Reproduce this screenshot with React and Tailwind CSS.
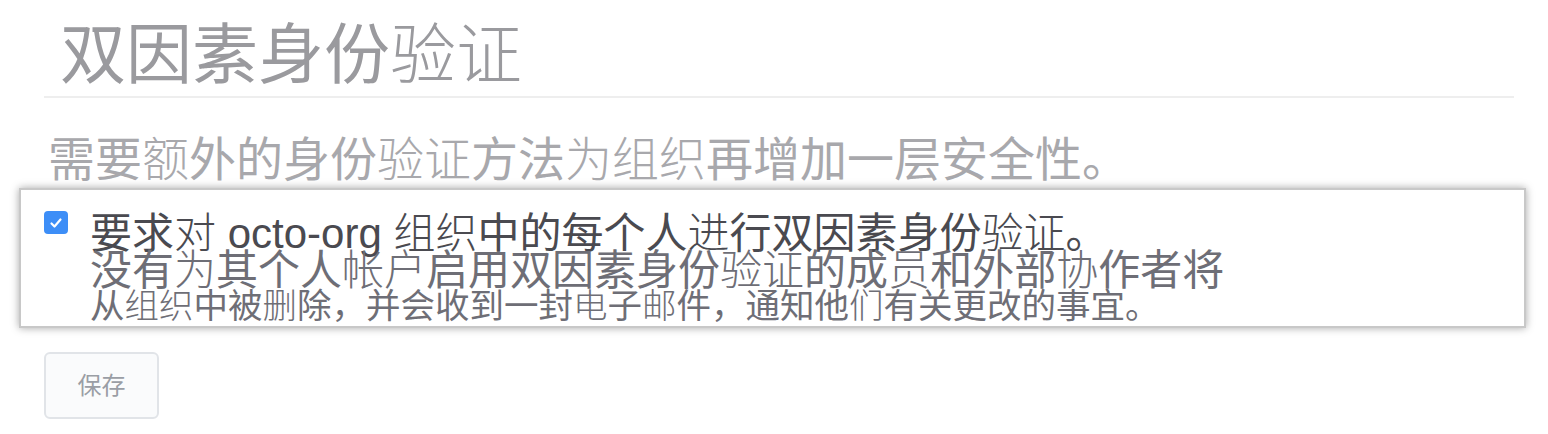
function B({ children }) {
  return <span className="font-normal">{children}</span>;
}
function T({ children }) {
  return <span className="font-extralight">{children}</span>;
}

export default function App() {
  const font = { fontFamily: '"Liberation Sans", "Noto Sans CJK SC", sans-serif' };
  return (
    <div className="w-[1548px] h-[434px] bg-white overflow-hidden" style={font}>
      <div className="pl-[44px] pr-[34px]">
        <div className="pt-[22px] pl-[16px] pb-[8px] border-b-2 border-[#eeeeee]">
          <h1 className="text-[66px] leading-[66px] text-[#9a9a9e] font-normal">
            <B>双因素身份</B><T>验证</T>
          </h1>
        </div>
        <p className="mt-[38px] ml-[4px] text-[47px] leading-[47px] text-[#a8a8ac]">
          <B>需要</B><T>额</T><B>外的身份</B><T>验证</T><B>方法</B><T>为组织</T><B>再增加一层安全性。</B>
        </p>
      </div>
      <div className="mt-[5px] ml-[19px] w-[1507px] h-[140px] border-2 border-[#c8c8c8] bg-white shadow-[0_0_8px_rgba(0,0,0,0.35)] flex">
        <div className="pl-[23px] pt-[21px]">
          <div className="w-[24px] h-[23px] rounded-[4px] bg-[#3d8ef7] flex items-center justify-center">
            <svg width="16" height="16" viewBox="0 0 16 16" fill="none">
              <path d="M3.5 8.5 L6.5 11.5 L12.5 4.5" stroke="white" strokeWidth="2.2" strokeLinecap="round" strokeLinejoin="round" />
            </svg>
          </div>
        </div>
        <div className="pl-[22px] pt-[24px]">
          <div className="text-[42px] leading-[39px] text-[#4a4a50] whitespace-nowrap">
            <B>要求</B><T>对</T> octo-org <T>组织</T><B>中的每个人</B><T>进</T><B>行双因素身份</B><T>验证</T>。
          </div>
          <div className="text-[42px] leading-[36px] text-[#6e6e76] whitespace-nowrap">
            <B>没有</B><T>为</T><B>其个人</B><T>帐户</T><B>启用双因素身份</B><T>验证</T><B>的成</B><T>员</T><B>和外部</B><T>协</T><B>作者将</B>
          </div>
          <div className="text-[34.5px] leading-[34px] text-[#6e6e76] whitespace-nowrap">
            <B>从</B><T>组织</T><B>中被</B><T>删</T><B>除，并会收到一封</B><T>电</T><B>子</B><T>邮</T><B>件，通知他</B><T>们</T><B>有关更改的事宜。</B>
          </div>
        </div>
      </div>
      <div className="pl-[44px] mt-[24px]">
        <button className="w-[115px] h-[67px] rounded-[6px] border-2 border-[#e1e4e8] bg-[#fafbfc] text-[24px] text-[#9a9ea5] flex items-center justify-center">保存</button>
      </div>
    </div>
  );
}
